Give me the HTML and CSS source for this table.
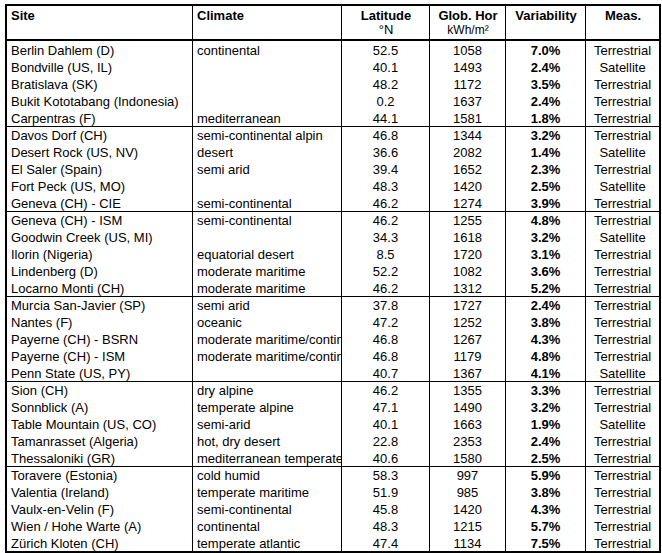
FILE: index.html
```html
<!DOCTYPE html>
<html>
<head>
<meta charset="utf-8">
<link rel="stylesheet" href="styles.css">
</head>
<body>
<table class="data">
<colgroup>
<col class="c-site"><col class="c-clim"><col class="c-lat"><col class="c-glob"><col class="c-var"><col class="c-meas">
</colgroup>
<thead>
<tr>
<th class="l">Site</th>
<th class="l">Climate</th>
<th>Latitude<span class="sub">°N</span></th>
<th>Glob. Hor<span class="sub small">kWh/m²</span></th>
<th>Variability</th>
<th class="last">Meas.</th>
</tr>
</thead>
<tbody>
<tr><td>Berlin Dahlem (D)</td><td>continental</td><td class="c">52.5</td><td class="c">1058</td><td class="c b">7.0%</td><td class="c last">Terrestrial</td></tr>
<tr><td>Bondville (US, IL)</td><td></td><td class="c">40.1</td><td class="c">1493</td><td class="c b">2.4%</td><td class="c last">Satellite</td></tr>
<tr><td>Bratislava (SK)</td><td></td><td class="c">48.2</td><td class="c">1172</td><td class="c b">3.5%</td><td class="c last">Terrestrial</td></tr>
<tr><td>Bukit Kototabang (Indonesia)</td><td></td><td class="c">0.2</td><td class="c">1637</td><td class="c b">2.4%</td><td class="c last">Terrestrial</td></tr>
<tr><td>Carpentras (F)</td><td>mediterranean</td><td class="c">44.1</td><td class="c">1581</td><td class="c b">1.8%</td><td class="c last">Terrestrial</td></tr>
<tr class="grp"><td>Davos Dorf (CH)</td><td>semi-continental alpin</td><td class="c">46.8</td><td class="c">1344</td><td class="c b">3.2%</td><td class="c last">Terrestrial</td></tr>
<tr><td>Desert Rock (US, NV)</td><td>desert</td><td class="c">36.6</td><td class="c">2082</td><td class="c b">1.4%</td><td class="c last">Satellite</td></tr>
<tr><td>El Saler (Spain)</td><td>semi arid</td><td class="c">39.4</td><td class="c">1652</td><td class="c b">2.3%</td><td class="c last">Terrestrial</td></tr>
<tr><td>Fort Peck (US, MO)</td><td></td><td class="c">48.3</td><td class="c">1420</td><td class="c b">2.5%</td><td class="c last">Satellite</td></tr>
<tr><td>Geneva (CH) - CIE</td><td>semi-continental</td><td class="c">46.2</td><td class="c">1274</td><td class="c b">3.9%</td><td class="c last">Terrestrial</td></tr>
<tr class="grp"><td>Geneva (CH) - ISM</td><td>semi-continental</td><td class="c">46.2</td><td class="c">1255</td><td class="c b">4.8%</td><td class="c last">Terrestrial</td></tr>
<tr><td>Goodwin Creek (US, MI)</td><td></td><td class="c">34.3</td><td class="c">1618</td><td class="c b">3.2%</td><td class="c last">Satellite</td></tr>
<tr><td>Ilorin (Nigeria)</td><td>equatorial desert</td><td class="c">8.5</td><td class="c">1720</td><td class="c b">3.1%</td><td class="c last">Terrestrial</td></tr>
<tr><td>Lindenberg (D)</td><td>moderate maritime</td><td class="c">52.2</td><td class="c">1082</td><td class="c b">3.6%</td><td class="c last">Terrestrial</td></tr>
<tr><td>Locarno Monti (CH)</td><td>moderate maritime</td><td class="c">46.2</td><td class="c">1312</td><td class="c b">5.2%</td><td class="c last">Terrestrial</td></tr>
<tr class="grp"><td>Murcia San-Javier (SP)</td><td>semi arid</td><td class="c">37.8</td><td class="c">1727</td><td class="c b">2.4%</td><td class="c last">Terrestrial</td></tr>
<tr><td>Nantes (F)</td><td>oceanic</td><td class="c">47.2</td><td class="c">1252</td><td class="c b">3.8%</td><td class="c last">Terrestrial</td></tr>
<tr><td>Payerne (CH) - BSRN</td><td>moderate maritime/continental</td><td class="c">46.8</td><td class="c">1267</td><td class="c b">4.3%</td><td class="c last">Terrestrial</td></tr>
<tr><td>Payerne (CH) - ISM</td><td>moderate maritime/continental</td><td class="c">46.8</td><td class="c">1179</td><td class="c b">4.8%</td><td class="c last">Terrestrial</td></tr>
<tr><td>Penn State (US, PY)</td><td></td><td class="c">40.7</td><td class="c">1367</td><td class="c b">4.1%</td><td class="c last">Satellite</td></tr>
<tr class="grp"><td>Sion (CH)</td><td>dry alpine</td><td class="c">46.2</td><td class="c">1355</td><td class="c b">3.3%</td><td class="c last">Terrestrial</td></tr>
<tr><td>Sonnblick (A)</td><td>temperate alpine</td><td class="c">47.1</td><td class="c">1490</td><td class="c b">3.2%</td><td class="c last">Terrestrial</td></tr>
<tr><td>Table Mountain (US, CO)</td><td>semi-arid</td><td class="c">40.1</td><td class="c">1663</td><td class="c b">1.9%</td><td class="c last">Satellite</td></tr>
<tr><td>Tamanrasset (Algeria)</td><td>hot, dry desert</td><td class="c">22.8</td><td class="c">2353</td><td class="c b">2.4%</td><td class="c last">Terrestrial</td></tr>
<tr><td>Thessaloniki (GR)</td><td>mediterranean temperate</td><td class="c">40.6</td><td class="c">1580</td><td class="c b">2.5%</td><td class="c last">Terrestrial</td></tr>
<tr class="grp"><td>Toravere (Estonia)</td><td>cold humid</td><td class="c">58.3</td><td class="c">997</td><td class="c b">5.9%</td><td class="c last">Terrestrial</td></tr>
<tr><td>Valentia (Ireland)</td><td>temperate maritime</td><td class="c">51.9</td><td class="c">985</td><td class="c b">3.8%</td><td class="c last">Terrestrial</td></tr>
<tr><td>Vaulx-en-Velin (F)</td><td>semi-continental</td><td class="c">45.8</td><td class="c">1420</td><td class="c b">4.3%</td><td class="c last">Terrestrial</td></tr>
<tr><td>Wien / Hohe Warte (A)</td><td>continental</td><td class="c">48.3</td><td class="c">1215</td><td class="c b">5.7%</td><td class="c last">Terrestrial</td></tr>
<tr><td>Zürich Kloten (CH)</td><td>temperate atlantic</td><td class="c">47.4</td><td class="c">1134</td><td class="c b">7.5%</td><td class="c last">Terrestrial</td></tr>
</tbody>
</table>
</body>
</html>
```
FILE: styles.css
```css
html, body {
  margin: 0;
  padding: 0;
  background: #ffffff;
}
body {
  padding: 4px 0 0 5px;
  font-family: "Liberation Sans", Arial, sans-serif;
  font-size: 13px;
  color: #000;
}
.data {
  table-layout: fixed;
  width: 656px;
  border-collapse: separate;
  border-spacing: 0;
  border: 2px solid #000;
}
.c-site { width: 186px; }
.c-clim { width: 149px; }
.c-lat { width: 88px; }
.c-glob { width: 76px; }
.c-var { width: 80px; }
.c-meas { width: 73px; }
th, td {
  box-sizing: border-box;
  border-right: 1px solid #000;
  padding: 0 3px 0 4px;
  white-space: nowrap;
  overflow: hidden;
}
th.last, td.last { border-right: none; }
th {
  height: 35px;
  vertical-align: top;
  text-align: center;
  font-weight: bold;
  border-bottom: 2px solid #000;
  padding-top: 2px;
  line-height: 15px;
}
th.l { text-align: left; }
.sub {
  display: block;
  font-weight: normal;
  line-height: 14px;
}
.small { font-size: 12px; }
td {
  height: 17px;
  line-height: 14px;
  vertical-align: bottom;
  padding-bottom: 0;
}
td.c { text-align: center; padding: 0; }
td.b { font-weight: bold; }
tr.grp td { border-top: 1px solid #000; height: 17px; }
```
